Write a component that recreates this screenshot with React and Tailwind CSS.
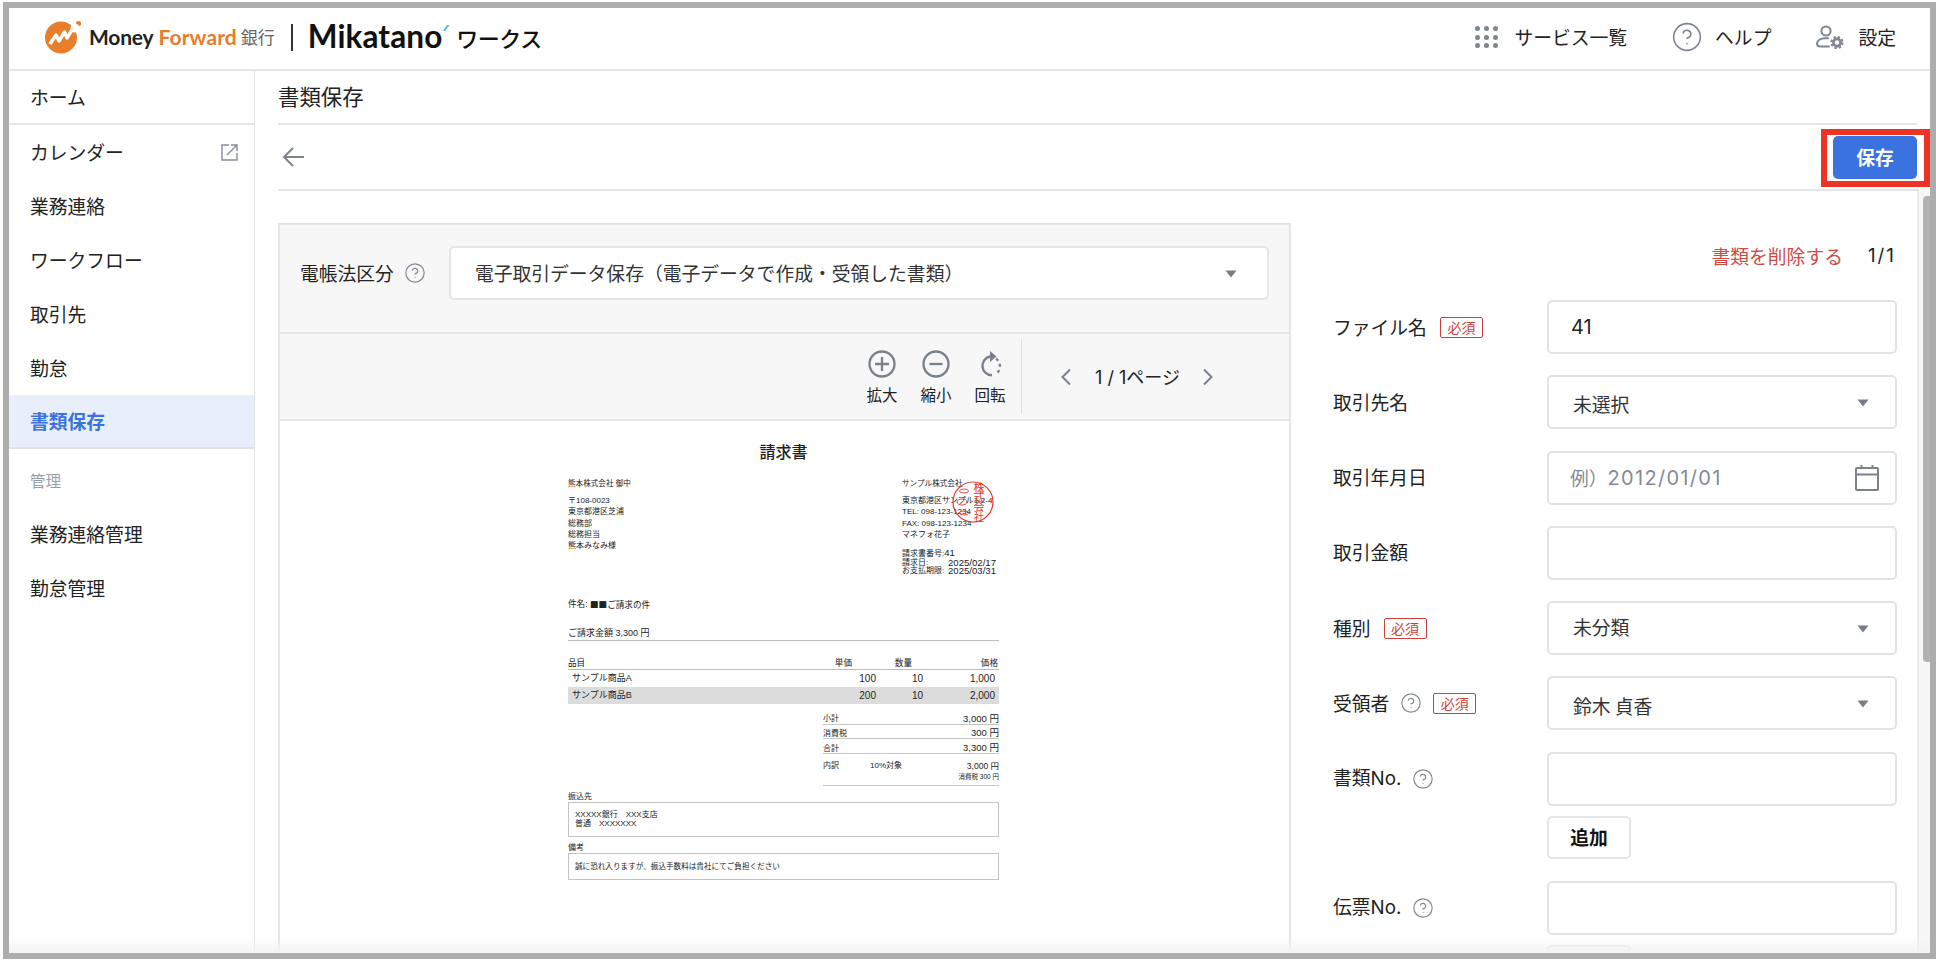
import { CircleHelp } from 'lucide-react';

const nav = ['カレンダー', '業務連絡', 'ワークフロー', '取引先', '勤怠'];
const latin = "font-['Inter',sans-serif]";

function Help() {
  return <CircleHelp size={22} strokeWidth={1.3} className="text-[#858b96] shrink-0" />;
}

function Required() {
  return (
    <span className="w-[43px] h-[21px] shrink-0 flex items-center justify-center border border-[#cf3f38] rounded-[2px] text-[14px] leading-none text-[#cf3f38]">必須</span>
  );
}

function Caret() {
  return (
    <svg width="12" height="8" viewBox="0 0 12 8" className="absolute right-[26px] top-[22px]">
      <path d="M0.5 0.5h11L6 7.5z" fill="#767c88" />
    </svg>
  );
}

function Row({ label, help, required, children }) {
  return (
    <div className="flex items-center h-[54px]">
      <div className="w-[214px] flex items-center text-[18.8px] leading-none text-[#222]">
        <span>{label}</span>
        {help && <span className="ml-[11px]"><Help /></span>}
        {required && <span className={help ? 'ml-[11px]' : 'ml-[13px]'}><Required /></span>}
      </div>
      {children}
    </div>
  );
}

function Box({ children, className = '' }) {
  return (
    <div className={`relative w-[350px] h-[54px] bg-white border-2 border-[#e0e4e6] rounded-[5px] flex items-center text-[18.8px] ${className}`}>
      {children}
    </div>
  );
}

function Logo() {
  return (
    <div className="flex items-center ml-[36px]">
      <svg width="36" height="34" viewBox="0 0 36 34" className="shrink-0">
        <circle cx="16" cy="17.5" r="16" fill="#e87d2c" />
        <circle cx="33.5" cy="3.5" r="2.6" fill="#e87d2c" />
        <circle cx="30" cy="8" r="4.5" fill="#fff" />
        <path d="M5 24 L11 15 L14 21 L19.5 12 L22 18 L27 10" fill="none" stroke="#fff" strokeWidth="3.4" strokeLinejoin="round" />
      </svg>
      <span className="ml-[8px] font-['Lato',sans-serif] text-[21px] font-bold tracking-[-0.2px] text-[#222]">Money</span>
      <span className="ml-[5px] font-['Lato',sans-serif] text-[21px] font-bold tracking-[0.1px] text-[#e87d2c]">Forward</span>
      <span className="ml-[4px] text-[17px] text-[#666]">銀行</span>
      <span className="ml-[16px] w-[2px] h-[27px] bg-[#333]" />
      <span className="ml-[15px] font-['Lato',sans-serif] text-[31.5px] font-bold leading-none tracking-[0.1px] text-[#111]">Mikatano</span>
      <svg width="8" height="8" viewBox="0 0 8 8" className="mb-[18px]"><path d="M1 7L5 1h2.5L3 7z" fill="#4db8ea" /></svg>
      <span className="ml-[6px] text-[22px] font-medium leading-none tracking-[-0.5px] text-[#111]">ワークス</span>
    </div>
  );
}

function HeaderLinks() {
  return (
    <div className="flex items-center text-[18.8px] text-[#222]">
      <div className="grid grid-cols-3 gap-x-[4px] gap-y-[3.5px] w-[23px]">
        {Array.from({ length: 9 }).map((_, i) => (
          <span key={i} className="w-[5px] h-[5px] rounded-full bg-[#7f8591]" />
        ))}
      </div>
      <span className="ml-[16px]">サービス一覧</span>
      <span className="ml-[44px]"><CircleHelp size={32} strokeWidth={1.2} className="text-[#7f8591]" /></span>
      <span className="ml-[12px]">ヘルプ</span>
      <svg width="29" height="25" viewBox="0 0 29 25" fill="none" stroke="#7f8591" strokeWidth="2" className="ml-[44px]">
        <circle cx="11" cy="6" r="4.6" />
        <path d="M13 13.3h-3C5.5 13.3 2 15.5 2 18.5c0 2 1.5 3 3.5 3H14" strokeLinecap="round" />
        <circle cx="22" cy="17.5" r="3.6" strokeWidth="2.6" />
        <circle cx="22" cy="17.5" r="5.6" strokeWidth="2" strokeDasharray="2.4 2" />
      </svg>
      <span className="ml-[14px] mr-[34px]">設定</span>
    </div>
  );
}

function Sidebar() {
  return (
    <div className="w-[246px] shrink-0 border-r border-[#dfe3e6] text-[18.8px] text-[#222]">
      <div className="h-[54px] flex items-center pl-[21px] border-b-2 border-[#e4e7e9]">ホーム</div>
      {nav.map((n, i) => (
        <div key={n} className="h-[54px] flex items-center justify-between pl-[21px] pr-[16px]">
          {n}
          {i === 0 && (
            <svg width="17" height="17" viewBox="0 0 17 17" fill="none" stroke="#858b96" strokeWidth="1.4">
              <path d="M8 1H1v15h15V9" />
              <path d="M6 11L15.5 1.5M10 1h6v6" />
            </svg>
          )}
        </div>
      ))}
      <div className="h-[54px] flex items-center pl-[21px] bg-[#e8effb] border-b-2 border-[#dde2e6] font-bold text-[#3a72e0]">書類保存</div>
      <div className="h-[58px] pt-[6px] flex items-center pl-[21px] text-[15.5px] text-[#989da5]">管理</div>
      <div className="h-[54px] flex items-center pl-[21px]">業務連絡管理</div>
      <div className="h-[54px] flex items-center pl-[21px]">勤怠管理</div>
    </div>
  );
}

function ToolButton({ label, children }) {
  return (
    <div className="w-[54px] flex flex-col items-center">
      <div className="h-[30px] flex items-center">{children}</div>
      <span className="mt-[5px] text-[15.5px] leading-[20px] text-[#222]">{label}</span>
    </div>
  );
}

function TotalRow({ label, value }) {
  return (
    <div className="h-[14.7px] flex justify-between items-end pb-[0.5px] border-b border-[#c8c8c8] text-[8px] leading-none">
      <span>{label}</span>
      <span className="text-[9.5px]">{value}</span>
    </div>
  );
}

function Invoice() {
  return (
    <div className="relative w-[431px] ml-[288px] pt-[22px] text-[#222] font-['Liberation_Sans','Noto_Sans_CJK_JP',sans-serif]">
      <div className="h-[20px] flex items-center justify-center text-[16px] font-medium leading-none">請求書</div>
      <div className="h-[112px] mt-[15px] flex justify-between text-[8px] leading-[11.25px]">
        <div className="w-[200px]">
          <div className="text-[7.6px] leading-[12px]">熊本株式会社 御中</div>
          <div className="mt-[5px]">〒108-0023</div>
          <div>東京都港区芝浦</div>
          <div>総務部</div>
          <div>総務担当</div>
          <div>熊本みなみ様</div>
        </div>
        <div className="w-[97px]">
          <div className="text-[7.6px] leading-[12px]">サンプル株式会社</div>
          <div className="mt-[5px] whitespace-nowrap">東京都港区サンプル1-2-4</div>
          <div>TEL: 098-123-1234</div>
          <div>FAX: 098-123-1234</div>
          <div>マネフォ花子</div>
          <div className="mt-[9px] leading-[8.5px]">請求書番号:<span className="text-[9.6px]">41</span></div>
          <div className="w-[94px] leading-[8.5px] flex justify-between"><span>請求日:</span><span className="text-[9.6px]">2025/02/17</span></div>
          <div className="w-[94px] leading-[8.5px] flex justify-between whitespace-nowrap"><span>お支払期限:</span><span className="text-[9.6px]">2025/03/31</span></div>
        </div>
      </div>
      <svg width="44" height="44" viewBox="0 0 44 44" className="absolute left-[383px] top-[59px]">
        <circle cx="22" cy="22" r="20" fill="none" stroke="#e2352b" strokeWidth="1.2" />
        <ellipse cx="13" cy="11" rx="4.5" ry="2" fill="none" stroke="#e2352b" strokeWidth="0.9" />
        <ellipse cx="11" cy="22" rx="5" ry="3" fill="none" stroke="#e2352b" strokeWidth="0.9" />
        <ellipse cx="13" cy="33" rx="4.5" ry="2" fill="none" stroke="#e2352b" strokeWidth="0.9" />
        <text x="28" y="12" fontSize="11" fill="#e2352b" textAnchor="middle">株</text>
        <text x="28" y="21" fontSize="11" fill="#e2352b" textAnchor="middle">式</text>
        <text x="28" y="31" fontSize="11" fill="#e2352b" textAnchor="middle">会</text>
        <text x="28" y="41" fontSize="10" fill="#e2352b" textAnchor="middle">社</text>
      </svg>
      <div className="mt-[8px] h-[12px] flex items-center text-[8.6px] leading-none">件名:&nbsp;<span className="font-['Noto_Sans_CJK_JP',sans-serif]">■■ご請求の件</span></div>
      <div className="mt-[17px] h-[14px] border-b border-[#bdbdbd] flex items-center text-[9px] leading-none">ご請求金額 3,300 円</div>
      <div className="mt-[16px] h-[13px] border-b border-[#bdbdbd] flex items-center text-[8.6px] leading-none">
        <span className="w-[240px]">品目</span>
        <span className="w-[44px] text-right">単価</span>
        <span className="w-[60px] text-right">数量</span>
        <span className="w-[86px] text-right">価格</span>
      </div>
      <div className="h-[17px] flex items-center text-[9px] leading-none">
        <span className="w-[240px] pl-[4px]">サンプル商品A</span>
        <span className="w-[68px] text-right text-[10px]">100</span>
        <span className="w-[47px] text-right text-[10px]">10</span>
        <span className="w-[72px] text-right text-[10px]">1,000</span>
      </div>
      <div className="h-[17px] flex items-center bg-[#dcdcdc] text-[9px] leading-none">
        <span className="w-[240px] pl-[4px]">サンプル商品B</span>
        <span className="w-[68px] text-right text-[10px]">200</span>
        <span className="w-[47px] text-right text-[10px]">10</span>
        <span className="w-[72px] text-right text-[10px]">2,000</span>
      </div>
      <div className="mt-[6px] ml-auto w-[176px]">
        <TotalRow label="小計" value="3,000 円" />
        <TotalRow label="消費税" value="300 円" />
        <TotalRow label="合計" value="3,300 円" />
        <div className="h-[32px] border-b border-[#c8c8c8] pt-[8px] text-[8px] leading-none">
          <div className="flex">
            <span className="w-[47px]">内訳</span>
            <span>10%対象</span>
            <span className="ml-auto text-[8.5px]">3,000 円</span>
          </div>
          <div className="mt-[3px] text-right text-[6.5px]">消費税 300 円</div>
        </div>
      </div>
      <div className="mt-[5px] h-[11px] flex items-center text-[8px] leading-none">振込先</div>
      <div className="h-[35px] border border-[#c4c4c4] pl-[6px] pt-[8px] text-[8px] leading-[8.7px]">
        <div>XXXXX銀行　XXX支店</div>
        <div>普通　XXXXXXX</div>
      </div>
      <div className="mt-[5px] h-[11px] flex items-center text-[8px] leading-none">備考</div>
      <div className="h-[27px] border border-[#c4c4c4] pl-[6px] flex items-center text-[7.6px] leading-none">誠に恐れ入りますが、振込手数料は貴社にてご負担ください</div>
    </div>
  );
}

function DocPanel() {
  return (
    <div className="w-[1013px] shrink-0 border-x-2 border-t-2 border-[#e4e7e7]">
      <div className="h-[109px] bg-[#f7f7f7] border-b-2 border-[#e4e7e7] flex items-start pt-[21px] pl-[20px] pr-[20px] text-[18.8px] text-[#222]">
        <span className="h-[54px] flex items-center">電帳法区分</span>
        <span className="h-[54px] flex items-center ml-[10px]"><Help /></span>
        <div className="relative ml-[23px] flex-1 h-[54px] bg-white border-2 border-[#e4e7e7] rounded-[5px] flex items-center pl-[24px] text-[#333]">
          電子取引データ保存（電子データで作成・受領した書類）
          <svg width="12" height="8" viewBox="0 0 12 8" className="absolute right-[30px] top-[22px]"><path d="M0.5 0.5h11L6 7.5z" fill="#767c88" /></svg>
        </div>
      </div>
      <div className="h-[87px] bg-[#f7f7f7] border-b-2 border-[#e4e7e7] flex items-center justify-end pr-[75px]">
        <div className="flex items-center">
          <ToolButton label="拡大">
            <svg width="28" height="28" viewBox="0 0 28 28" fill="none" stroke="#7a808c" strokeWidth="2.3"><circle cx="14" cy="14" r="12.5" /><path d="M14 7v14M7 14h14" /></svg>
          </ToolButton>
          <ToolButton label="縮小">
            <svg width="28" height="28" viewBox="0 0 28 28" fill="none" stroke="#7a808c" strokeWidth="2.3"><circle cx="14" cy="14" r="12.5" /><path d="M7.5 14h13" /></svg>
          </ToolButton>
          <ToolButton label="回転">
            <svg width="28" height="30" viewBox="0 0 28 30" fill="none" stroke="#7a808c" strokeWidth="2.4">
              <path d="M14 7.5a9.5 9.5 0 0 0 2 18.8" />
              <path d="M14 2l6.5 5.5L14 13z" fill="#7a808c" stroke="none" />
              <path d="M20 9.6a9.5 9.5 0 0 1 1 14.6" strokeDasharray="3 3.4" />
            </svg>
          </ToolButton>
        </div>
        <div className="ml-[4px] w-[1px] h-[75px] bg-[#dcdfe1]" />
        <div className="ml-[38px] flex items-center text-[18px] text-[#222] leading-none">
          <svg width="12" height="18" viewBox="0 0 12 18" fill="none" stroke="#7a808c" strokeWidth="2" className="mr-[23px]"><path d="M10 1.5L2.5 9l7.5 7.5" /></svg>
          <span className="whitespace-nowrap"><span className={latin}>1 / 1</span>ページ</span>
          <svg width="12" height="18" viewBox="0 0 12 18" fill="none" stroke="#7a808c" strokeWidth="2" className="ml-[22px]"><path d="M2 1.5L9.5 9 2 16.5" /></svg>
        </div>
      </div>
      <Invoice />
    </div>
  );
}

function FormPanel() {
  return (
    <div className="flex-1 pl-[42px] pr-[22px]">
      <div className="h-[77px] pt-[19px] flex justify-end items-start text-[18.8px] leading-[28px]">
        <span className="text-[#cf4a44]">書類を削除する</span>
        <span className={`ml-[25px] mr-[1px] tracking-[2px] text-[#222] ${latin}`}>1/1</span>
      </div>
      <div className="flex flex-col gap-[21.3px]">
        <Row label="ファイル名" required><Box className={`pl-[22px] text-[20px] text-[#222] ${latin}`}>41</Box></Row>
        <Row label="取引先名"><Box className="pl-[24px] pt-[4px] text-[#333]">未選択<Caret /></Box></Row>
        <Row label="取引年月日">
          <Box className="pl-[21px] text-[#858a95]">
            例）<span className={`text-[20px] tracking-[1.3px] ${latin}`}>2012/01/01</span>
            <svg width="26" height="28" viewBox="0 0 26 28" fill="none" stroke="#7a808c" strokeWidth="2" className="absolute right-[15px] top-[11px]">
              <rect x="2" y="4" width="22" height="22" rx="1" />
              <path d="M2 10.5h22M7.5 1v4M18.5 1v4" />
            </svg>
          </Box>
        </Row>
        <Row label="取引金額"><Box /></Row>
        <Row label="種別" required><Box className="pl-[24px] pb-[2px] text-[#333]">未分類<Caret /></Box></Row>
        <Row label="受領者" help required><Box className="pl-[24px] pt-[6px] text-[#333]">鈴木 貞香<Caret /></Box></Row>
        <Row label={<>書類<span className={latin}>No.</span></>} help><Box /></Row>
      </div>
      <div className="ml-[214px] mt-[10px] w-[84px] h-[43px] border-2 border-[#e4e7e7] rounded-[5px] flex items-center justify-center text-[18.8px] font-bold text-[#111]">追加</div>
      <div className="mt-[22px]">
        <Row label={<>伝票<span className={latin}>No.</span></>} help><Box /></Row>
      </div>
      <div className="ml-[214px] mt-[10px] w-[84px] h-[43px] border-2 border-[#e4e7e7] rounded-[5px]" />
    </div>
  );
}

export default function App() {
  return (
    <div className="w-[1936px] h-[962px] bg-white pl-[3px] pt-[2px] overflow-hidden font-['Noto_Sans_CJK_JP',sans-serif]">
      <div className="relative w-[1933px] h-[957px] border-[6px] border-[#adadab] overflow-hidden flex flex-col">
        <div className="h-[63px] shrink-0 pb-[3px] border-b-2 border-[#e4e7e9] flex items-center justify-between">
          <Logo />
          <HeaderLinks />
        </div>
        <div className="flex flex-1 min-h-0">
          <Sidebar />
          <div className="flex-1 min-w-0 pl-[23px] flex flex-col">
            <div className="h-[54px] mr-[13px] pb-[2px] shrink-0 border-b-2 border-[#e4e7e9] flex items-center text-[21.4px] text-[#222]">書類保存</div>
            <div className="h-[66px] mr-[11px] shrink-0 border-b-2 border-[#e4e7e9] flex items-center justify-between">
              <svg width="24" height="22" viewBox="0 0 24 22" fill="none" stroke="#7d838f" strokeWidth="2" className="ml-[3px]">
                <path d="M23 11H3M12 2l-9 9 9 9" />
              </svg>
              <div className="w-[84px] h-[43px] mr-[2px] rounded-[5px] bg-[#3a72e0] text-white font-bold text-[18.8px] flex items-center justify-center">保存</div>
            </div>
            <div className="flex-1 min-h-0 flex overflow-hidden">
              <div className="flex-1 min-w-0 flex pt-[32px] border-r-2 border-[#ececec]">
                <DocPanel />
                <FormPanel />
              </div>
              <div className="w-[11px] shrink-0 bg-[#f7f7f7] pl-[4px] pt-[5px]">
                <div className="h-[466px] bg-[#b3b3b3] rounded-l-[4px]" />
              </div>
            </div>
          </div>
        </div>
        {/* red highlight and bottom fade sit on top of the page */}
        <div className="absolute left-[1812px] top-[121px] w-[109px] h-[58px] border-[6px] border-[#ec3324]" />
        <div className="absolute left-0 right-0 bottom-0 h-[16px] bg-gradient-to-b from-transparent to-[#f3f3f3]" />
      </div>
    </div>
  );
}
